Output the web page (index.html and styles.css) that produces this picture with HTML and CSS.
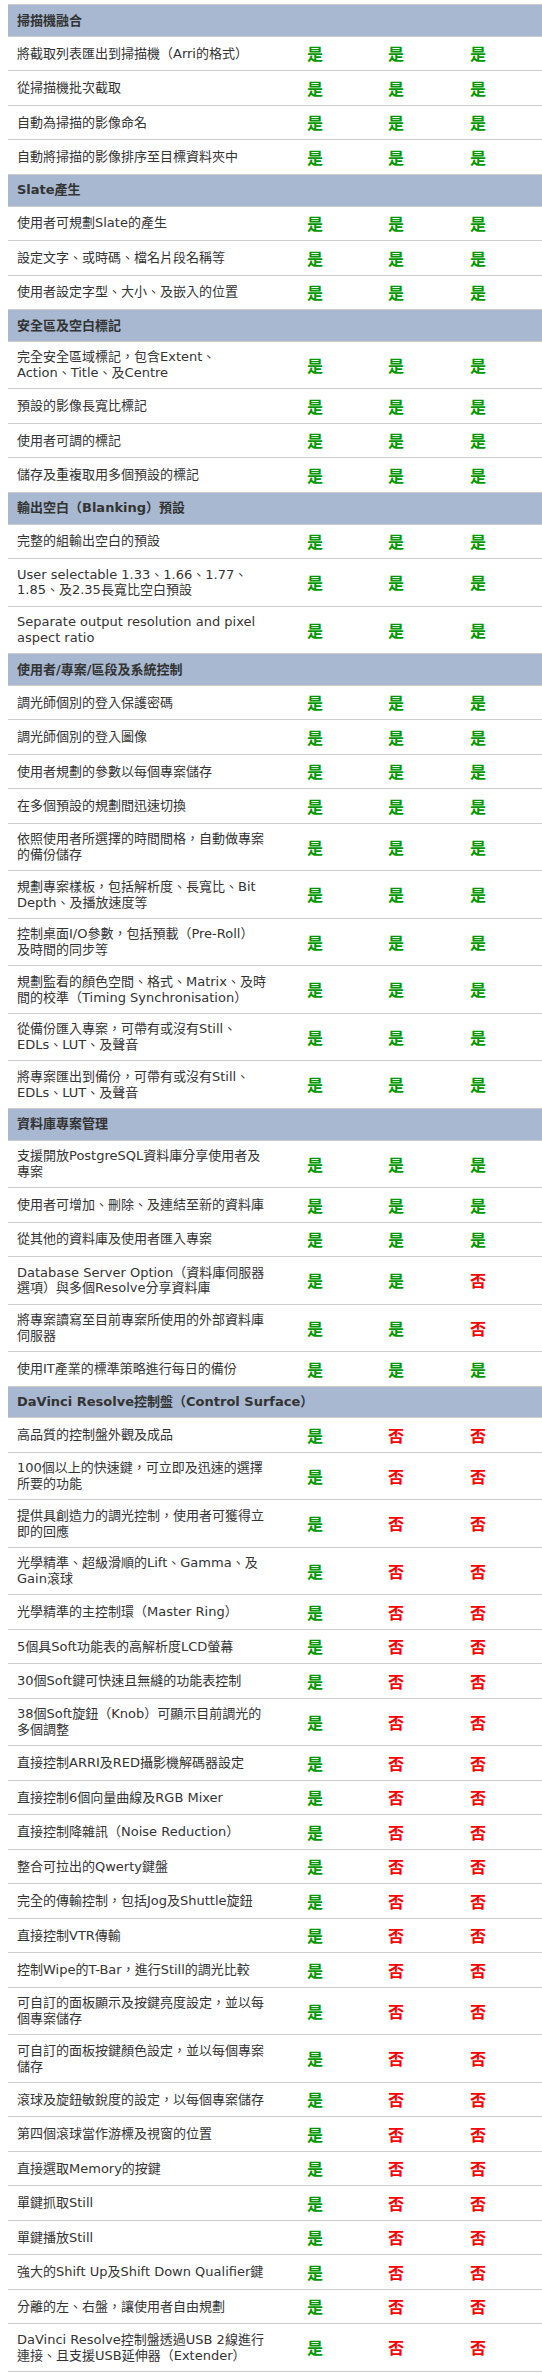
FILE: index.html
```html
<!DOCTYPE html>
<html lang="zh-Hant">
<head>
<meta charset="utf-8">
<title>DaVinci Resolve 功能比較</title>
<link rel="stylesheet" href="styles.css">
</head>
<body>
<table class="compare">
<colgroup>
<col class="col-feature"><col class="col-a"><col class="col-b"><col class="col-c">
</colgroup>
<tbody>
<tr class="section"><th colspan="4">掃描機融合</th></tr>
<tr><td class="feature">將截取列表匯出到掃描機（Arri的格式）</td><td class="yes">是</td><td class="yes">是</td><td class="yes">是</td></tr>
<tr><td class="feature">從掃描機批次截取</td><td class="yes">是</td><td class="yes">是</td><td class="yes">是</td></tr>
<tr><td class="feature">自動為掃描的影像命名</td><td class="yes">是</td><td class="yes">是</td><td class="yes">是</td></tr>
<tr><td class="feature">自動將掃描的影像排序至目標資料夾中</td><td class="yes">是</td><td class="yes">是</td><td class="yes">是</td></tr>

<tr class="section"><th colspan="4">Slate產生</th></tr>
<tr><td class="feature">使用者可規劃Slate的產生</td><td class="yes">是</td><td class="yes">是</td><td class="yes">是</td></tr>
<tr><td class="feature">設定文字、或時碼、檔名片段名稱等</td><td class="yes">是</td><td class="yes">是</td><td class="yes">是</td></tr>
<tr><td class="feature">使用者設定字型、大小、及嵌入的位置</td><td class="yes">是</td><td class="yes">是</td><td class="yes">是</td></tr>

<tr class="section"><th colspan="4">安全區及空白標記</th></tr>
<tr><td class="feature">完全安全區域標記，包含Extent、Action、Title、及Centre</td><td class="yes">是</td><td class="yes">是</td><td class="yes">是</td></tr>
<tr><td class="feature">預設的影像長寬比標記</td><td class="yes">是</td><td class="yes">是</td><td class="yes">是</td></tr>
<tr><td class="feature">使用者可調的標記</td><td class="yes">是</td><td class="yes">是</td><td class="yes">是</td></tr>
<tr><td class="feature">儲存及重複取用多個預設的標記</td><td class="yes">是</td><td class="yes">是</td><td class="yes">是</td></tr>

<tr class="section"><th colspan="4">輸出空白（Blanking）預設</th></tr>
<tr><td class="feature">完整的組輸出空白的預設</td><td class="yes">是</td><td class="yes">是</td><td class="yes">是</td></tr>
<tr><td class="feature">User selectable 1.33、1.66、1.77、1.85、及2.35長寬比空白預設</td><td class="yes">是</td><td class="yes">是</td><td class="yes">是</td></tr>
<tr><td class="feature">Separate output resolution and pixel aspect ratio</td><td class="yes">是</td><td class="yes">是</td><td class="yes">是</td></tr>

<tr class="section"><th colspan="4">使用者/專案/區段及系統控制</th></tr>
<tr><td class="feature">調光師個別的登入保護密碼</td><td class="yes">是</td><td class="yes">是</td><td class="yes">是</td></tr>
<tr><td class="feature">調光師個別的登入圖像</td><td class="yes">是</td><td class="yes">是</td><td class="yes">是</td></tr>
<tr><td class="feature">使用者規劃的參數以每個專案儲存</td><td class="yes">是</td><td class="yes">是</td><td class="yes">是</td></tr>
<tr><td class="feature">在多個預設的規劃間迅速切換</td><td class="yes">是</td><td class="yes">是</td><td class="yes">是</td></tr>
<tr><td class="feature">依照使用者所選擇的時間間格，自動做專案的備份儲存</td><td class="yes">是</td><td class="yes">是</td><td class="yes">是</td></tr>
<tr><td class="feature">規劃專案樣板，包括解析度、長寬比、Bit Depth、及播放速度等</td><td class="yes">是</td><td class="yes">是</td><td class="yes">是</td></tr>
<tr><td class="feature">控制桌面I/O參數，包括預載（Pre-Roll）<br>及時間的同步等</td><td class="yes">是</td><td class="yes">是</td><td class="yes">是</td></tr>
<tr><td class="feature">規劃監看的顏色空間、格式、Matrix、及時間的校準（Timing Synchronisation）</td><td class="yes">是</td><td class="yes">是</td><td class="yes">是</td></tr>
<tr><td class="feature">從備份匯入專案，可帶有或沒有Still、EDLs、LUT、及聲音</td><td class="yes">是</td><td class="yes">是</td><td class="yes">是</td></tr>
<tr><td class="feature">將專案匯出到備份，可帶有或沒有Still、EDLs、LUT、及聲音</td><td class="yes">是</td><td class="yes">是</td><td class="yes">是</td></tr>

<tr class="section"><th colspan="4">資料庫專案管理</th></tr>
<tr><td class="feature">支援開放PostgreSQL資料庫分享使用者及專案</td><td class="yes">是</td><td class="yes">是</td><td class="yes">是</td></tr>
<tr><td class="feature">使用者可增加、刪除、及連結至新的資料庫</td><td class="yes">是</td><td class="yes">是</td><td class="yes">是</td></tr>
<tr><td class="feature">從其他的資料庫及使用者匯入專案</td><td class="yes">是</td><td class="yes">是</td><td class="yes">是</td></tr>
<tr><td class="feature">Database Server Option（資料庫伺服器選項）與多個Resolve分享資料庫</td><td class="yes">是</td><td class="yes">是</td><td class="no">否</td></tr>
<tr><td class="feature">將專案讀寫至目前專案所使用的外部資料庫伺服器</td><td class="yes">是</td><td class="yes">是</td><td class="no">否</td></tr>
<tr><td class="feature">使用IT產業的標準策略進行每日的備份</td><td class="yes">是</td><td class="yes">是</td><td class="yes">是</td></tr>

<tr class="section"><th colspan="4">DaVinci Resolve控制盤（Control Surface）</th></tr>
<tr><td class="feature">高品質的控制盤外觀及成品</td><td class="yes">是</td><td class="no">否</td><td class="no">否</td></tr>
<tr><td class="feature">100個以上的快速鍵，可立即及迅速的選擇所要的功能</td><td class="yes">是</td><td class="no">否</td><td class="no">否</td></tr>
<tr><td class="feature">提供具創造力的調光控制，使用者可獲得立即的回應</td><td class="yes">是</td><td class="no">否</td><td class="no">否</td></tr>
<tr><td class="feature">光學精準、超級滑順的Lift、Gamma、及Gain滾球</td><td class="yes">是</td><td class="no">否</td><td class="no">否</td></tr>
<tr><td class="feature">光學精準的主控制環（Master Ring）</td><td class="yes">是</td><td class="no">否</td><td class="no">否</td></tr>
<tr><td class="feature">5個具Soft功能表的高解析度LCD螢幕</td><td class="yes">是</td><td class="no">否</td><td class="no">否</td></tr>
<tr><td class="feature">30個Soft鍵可快速且無縫的功能表控制</td><td class="yes">是</td><td class="no">否</td><td class="no">否</td></tr>
<tr><td class="feature">38個Soft旋鈕（Knob）可顯示目前調光的多個調整</td><td class="yes">是</td><td class="no">否</td><td class="no">否</td></tr>
<tr><td class="feature">直接控制ARRI及RED攝影機解碼器設定</td><td class="yes">是</td><td class="no">否</td><td class="no">否</td></tr>
<tr><td class="feature">直接控制6個向量曲線及RGB Mixer</td><td class="yes">是</td><td class="no">否</td><td class="no">否</td></tr>
<tr><td class="feature">直接控制降雜訊（Noise Reduction）</td><td class="yes">是</td><td class="no">否</td><td class="no">否</td></tr>
<tr><td class="feature">整合可拉出的Qwerty鍵盤</td><td class="yes">是</td><td class="no">否</td><td class="no">否</td></tr>
<tr><td class="feature">完全的傳輸控制，包括Jog及Shuttle旋鈕</td><td class="yes">是</td><td class="no">否</td><td class="no">否</td></tr>
<tr><td class="feature">直接控制VTR傳輸</td><td class="yes">是</td><td class="no">否</td><td class="no">否</td></tr>
<tr><td class="feature">控制Wipe的T-Bar，進行Still的調光比較</td><td class="yes">是</td><td class="no">否</td><td class="no">否</td></tr>
<tr><td class="feature">可自訂的面板顯示及按鍵亮度設定，並以每個專案儲存</td><td class="yes">是</td><td class="no">否</td><td class="no">否</td></tr>
<tr><td class="feature">可自訂的面板按鍵顏色設定，並以每個專案儲存</td><td class="yes">是</td><td class="no">否</td><td class="no">否</td></tr>
<tr><td class="feature">滾球及旋鈕敏銳度的設定，以每個專案儲存</td><td class="yes">是</td><td class="no">否</td><td class="no">否</td></tr>
<tr><td class="feature">第四個滾球當作游標及視窗的位置</td><td class="yes">是</td><td class="no">否</td><td class="no">否</td></tr>
<tr><td class="feature">直接選取Memory的按鍵</td><td class="yes">是</td><td class="no">否</td><td class="no">否</td></tr>
<tr><td class="feature">單鍵抓取Still</td><td class="yes">是</td><td class="no">否</td><td class="no">否</td></tr>
<tr><td class="feature">單鍵播放Still</td><td class="yes">是</td><td class="no">否</td><td class="no">否</td></tr>
<tr><td class="feature">強大的Shift Up及Shift Down Qualifier鍵</td><td class="yes">是</td><td class="no">否</td><td class="no">否</td></tr>
<tr><td class="feature">分離的左、右盤，讓使用者自由規劃</td><td class="yes">是</td><td class="no">否</td><td class="no">否</td></tr>
<tr><td class="feature">DaVinci Resolve控制盤透過USB 2線進行連接、且支援USB延伸器（Extender）</td><td class="yes">是</td><td class="no">否</td><td class="no">否</td></tr>
</tbody>
</table>
</body>
</html>
```
FILE: styles.css
```css
html, body {
  background: #ffffff;
}

body {
  margin: 4px 0 0 8px;
  font-family: "DejaVu Sans", "Noto Sans CJK TC", sans-serif;
  font-size: 13px;
  color: #333333;
}

.compare {
  width: 534px;
  table-layout: fixed;
  border-collapse: separate;
  border-spacing: 0;
  border-top: 1px solid #cccccc;
}

.col-feature { width: 290px; }
.col-a { width: 81px; }
.col-b { width: 82px; }
.col-c { width: 81px; }

.compare th,
.compare td {
  padding: 7.5px 0 7.5px 9px;
  border-bottom: 1px solid #cccccc;
  line-height: 15.75px;
  text-align: left;
  vertical-align: middle;
}

.compare .feature {
  padding-right: 31px;
}

.section th {
  background: #a7b8d0;
  font-weight: bold;
  color: #333333;
}

.yes,
.no {
  font-family: "Noto Sans CJK TC", sans-serif;
  font-size: 16px;
  font-weight: 700;
}

.compare .yes,
.compare .no {
  line-height: 18.5px;
}

.yes { color: #009900; }
.no { color: #ff0000; }
```
